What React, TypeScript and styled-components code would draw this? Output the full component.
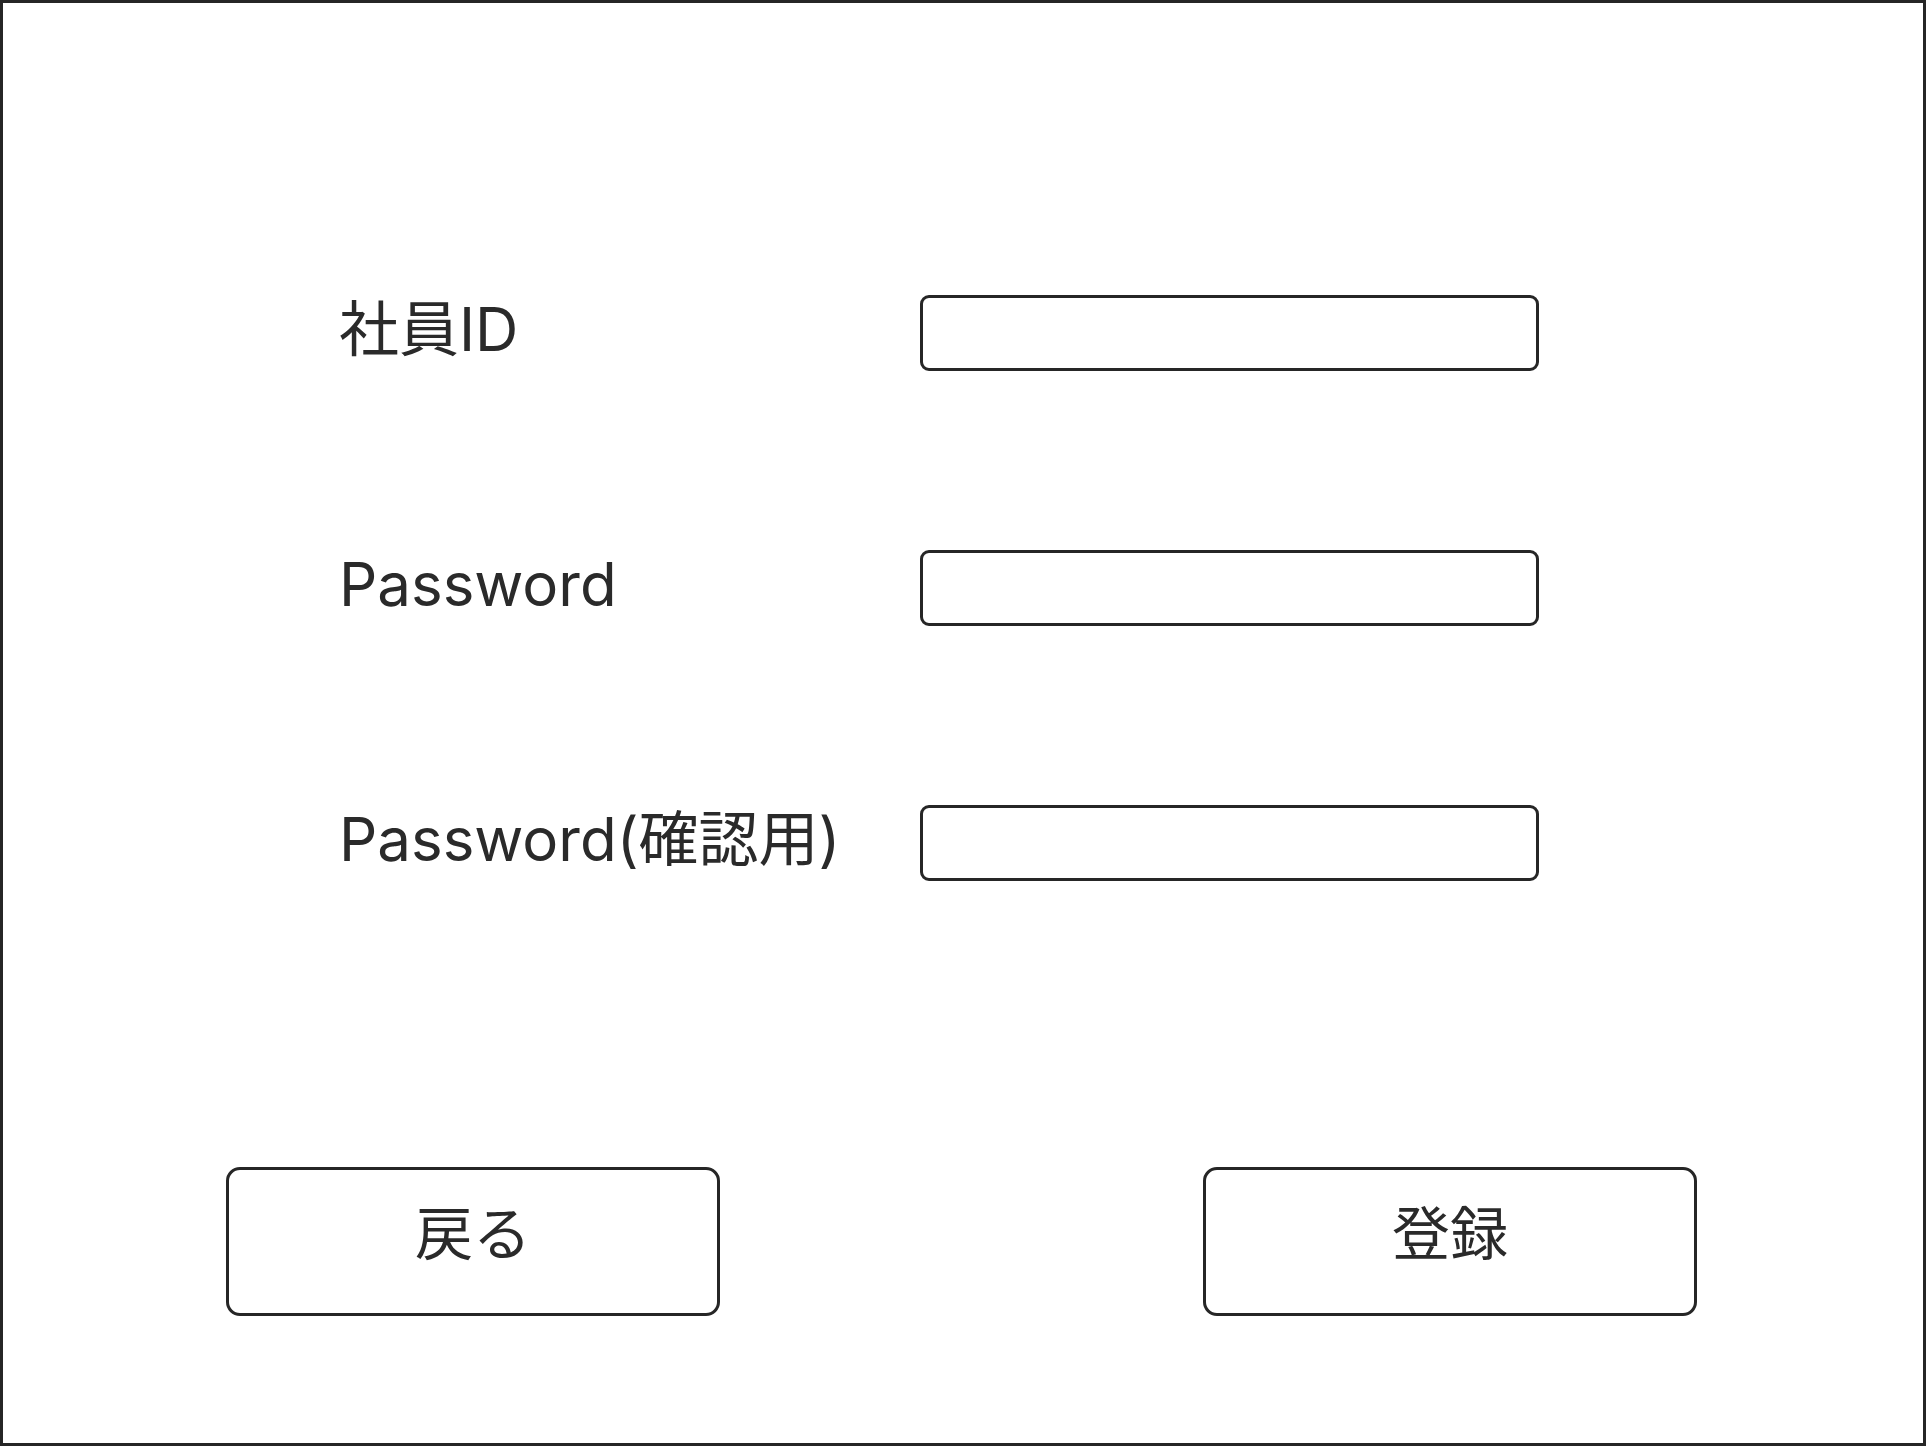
import React from "react";
import styled, { createGlobalStyle } from "styled-components";

const Global = createGlobalStyle`
  html, body { margin: 0; padding: 0; background: #ffffff; }
  * { box-sizing: border-box; }
`;

const Frame = styled.div`
  width: 1926px;
  height: 1446px;
  border: 3px solid #262626;
  background: #ffffff;
  display: flex;
  flex-direction: column;
  font-family: Inter, "Noto Sans CJK JP", sans-serif;
  color: #2a2a2a;
`;

const Form = styled.div`
  display: grid;
  grid-template-columns: 581px 619px;
  grid-auto-rows: 76px;
  row-gap: 179px;
  padding: 292px 0 0 336px;
`;

const Label = styled.label`
  display: flex;
  align-items: center;
  font-size: 60px;
  line-height: 1;
  white-space: nowrap;
  padding-bottom: 8px;
`;

const Input = styled.input`
  width: 619px;
  height: 76px;
  border: 3px solid #262626;
  border-radius: 9px;
  background: #ffffff;
  font-size: 32px;
  padding: 0 16px;
  outline: none;
`;

const Actions = styled.div`
  display: flex;
  justify-content: space-between;
  padding: 0 226px 0 223px;
  margin-top: 286px;
`;

const Button = styled.button`
  width: 494px;
  height: 149px;
  border: 3px solid #262626;
  border-radius: 14px;
  background: #ffffff;
  color: #2a2a2a;
  font-family: Inter, "Noto Sans CJK JP", sans-serif;
  font-size: 58px;
  line-height: 1;
  display: flex;
  align-items: center;
  justify-content: center;
  padding: 0 0 16px 0;
  cursor: pointer;
`;

const fields = ["社員ID", "Password", "Password(確認用)"];

export default function App() {
  return (
    <>
      <Global />
      <Frame>
        <Form>
          {fields.map((f) => (
            <React.Fragment key={f}>
              <Label>{f}</Label>
              <Input type={f.startsWith("Password") ? "password" : "text"} />
            </React.Fragment>
          ))}
        </Form>
        <Actions>
          <Button>戻る</Button>
          <Button>登録</Button>
        </Actions>
      </Frame>
    </>
  );
}
